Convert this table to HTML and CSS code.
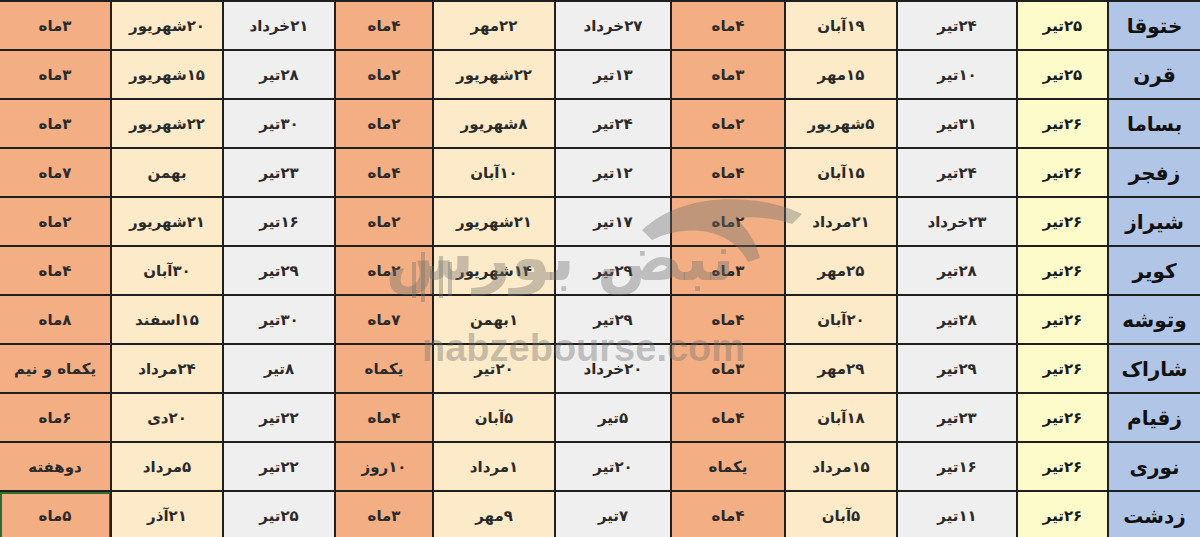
FILE: index.html
```html
<!DOCTYPE html>
<html lang="fa" dir="rtl">
<head>
<meta charset="utf-8">
<title>جدول</title>
<link rel="stylesheet" href="styles.css">
</head>
<body>
<div class="sheet">
  <div class="grid">
    <div class="c n">ختوقا</div><div class="c d">۲۵تیر</div><div class="c g">۲۴تیر</div><div class="c p">۱۹آبان</div><div class="c o">۴ماه</div><div class="c g">۲۷خرداد</div><div class="c p">۲۲مهر</div><div class="c o">۴ماه</div><div class="c g">۲۱خرداد</div><div class="c p">۲۰شهریور</div><div class="c o">۳ماه</div>
    <div class="c n">قرن</div><div class="c d">۲۵تیر</div><div class="c g">۱۰تیر</div><div class="c p">۱۵مهر</div><div class="c o">۳ماه</div><div class="c g">۱۳تیر</div><div class="c p">۲۲شهریور</div><div class="c o">۲ماه</div><div class="c g">۲۸تیر</div><div class="c p">۱۵شهریور</div><div class="c o">۳ماه</div>
    <div class="c n">بساما</div><div class="c d">۲۶تیر</div><div class="c g">۳۱تیر</div><div class="c p">۵شهریور</div><div class="c o">۲ماه</div><div class="c g">۲۴تیر</div><div class="c p">۸شهریور</div><div class="c o">۲ماه</div><div class="c g">۳۰تیر</div><div class="c p">۲۲شهریور</div><div class="c o">۳ماه</div>
    <div class="c n">زفجر</div><div class="c d">۲۶تیر</div><div class="c g">۲۴تیر</div><div class="c p">۱۵آبان</div><div class="c o">۴ماه</div><div class="c g">۱۲تیر</div><div class="c p">۱۰آبان</div><div class="c o">۴ماه</div><div class="c g">۲۳تیر</div><div class="c p">بهمن</div><div class="c o">۷ماه</div>
    <div class="c n">شیراز</div><div class="c d">۲۶تیر</div><div class="c g">۲۳خرداد</div><div class="c p">۲۱مرداد</div><div class="c o">۲ماه</div><div class="c g">۱۷تیر</div><div class="c p">۲۱شهریور</div><div class="c o">۲ماه</div><div class="c g">۱۶تیر</div><div class="c p">۲۱شهریور</div><div class="c o">۲ماه</div>
    <div class="c n">کویر</div><div class="c d">۲۶تیر</div><div class="c g">۲۸تیر</div><div class="c p">۲۵مهر</div><div class="c o">۳ماه</div><div class="c g">۲۹تیر</div><div class="c p">۱۴شهریور</div><div class="c o">۲ماه</div><div class="c g">۲۹تیر</div><div class="c p">۳۰آبان</div><div class="c o">۴ماه</div>
    <div class="c n">وتوشه</div><div class="c d">۲۶تیر</div><div class="c g">۲۸تیر</div><div class="c p">۲۰آبان</div><div class="c o">۴ماه</div><div class="c g">۲۹تیر</div><div class="c p">۱بهمن</div><div class="c o">۷ماه</div><div class="c g">۳۰تیر</div><div class="c p">۱۵اسفند</div><div class="c o">۸ماه</div>
    <div class="c n">شاراک</div><div class="c d">۲۶تیر</div><div class="c g">۲۹تیر</div><div class="c p">۲۹مهر</div><div class="c o">۳ماه</div><div class="c g">۲۰خرداد</div><div class="c p">۲۰تیر</div><div class="c o">یکماه</div><div class="c g">۸تیر</div><div class="c p">۲۴مرداد</div><div class="c o">یکماه و نیم</div>
    <div class="c n">زقیام</div><div class="c d">۲۶تیر</div><div class="c g">۲۳تیر</div><div class="c p">۱۸آبان</div><div class="c o">۴ماه</div><div class="c g">۵تیر</div><div class="c p">۵آبان</div><div class="c o">۴ماه</div><div class="c g">۲۲تیر</div><div class="c p">۲۰دی</div><div class="c o">۶ماه</div>
    <div class="c n">نوری</div><div class="c d">۲۶تیر</div><div class="c g">۱۶تیر</div><div class="c p">۱۵مرداد</div><div class="c o">یکماه</div><div class="c g">۲۰تیر</div><div class="c p">۱مرداد</div><div class="c o">۱۰روز</div><div class="c g">۲۲تیر</div><div class="c p">۵مرداد</div><div class="c o">دوهفته</div>
    <div class="c n">زدشت</div><div class="c d">۲۶تیر</div><div class="c g">۱۱تیر</div><div class="c p">۵آبان</div><div class="c o">۴ماه</div><div class="c g">۷تیر</div><div class="c p">۹مهر</div><div class="c o">۳ماه</div><div class="c g">۲۵تیر</div><div class="c p">۲۱آذر</div><div class="c o sel">۵ماه</div>
  </div>
  <div class="wm" aria-hidden="true">
    <svg class="wm-art" width="460" height="200" viewBox="0 0 460 200">
      <path d="M292 50 C318 26 356 16 398 20 C422 22 440 28 452 34 L442 44 C424 38 404 36 386 38 C398 50 406 62 410 78 L398 82 C390 66 376 56 358 52 C338 48 318 52 302 60 Z" fill="rgba(110,110,110,0.38)"/>
      <g fill="rgba(110,110,110,0.38)">
        <rect x="62" y="82" width="4" height="36"/>
        <rect x="71" y="72" width="4" height="50"/>
        <rect x="80" y="86" width="4" height="28"/>
        <rect x="89" y="76" width="4" height="42"/>
        <rect x="98" y="82" width="4" height="34"/>
      </g>
    </svg>
    <div class="wm-fa">نبض بورس</div>
    <div class="wm-en">nabzebourse.com</div>
  </div>
</div>
</body>
</html>
```
FILE: styles.css
```css
html, body {
  margin: 0;
  padding: 0;
  width: 1200px;
  height: 537px;
  overflow: hidden;
  background: #ffffff;
}
.sheet {
  position: relative;
  width: 1200px;
  height: 537px;
  overflow: hidden;
}
.grid {
  display: grid;
  direction: rtl;
  grid-template-columns: 91px 89px 118px 110px 112px 114px 120px 96px 110px 110px 110px;
  grid-auto-rows: 47px;
  gap: 2px;
  padding-top: 2px;
  background: #1f1f1f;
  width: 1200px;
}
.c {
  display: flex;
  align-items: center;
  justify-content: center;
  font-family: "DejaVu Sans", sans-serif;
  font-weight: bold;
  font-size: 15px;
  color: #2a2a2a;
  white-space: nowrap;
}
.n { background: #b1c5e6; font-size: 20px; color: #111; }
.d { background: #fdfbca; color: #1a1a1a; }
.g { background: #efeff0; }
.p { background: #fdeac8; }
.o { background: #f3ae84; }
.sel { box-shadow: inset 2px 2px 0 #2c6e2f, inset -1px 0 0 #2c6e2f; }
.wm {
  position: absolute;
  left: 350px;
  top: 180px;
  width: 460px;
  height: 200px;
  pointer-events: none;
}
.wm-art {
  position: absolute;
  left: 0;
  top: 0;
}
.wm-fa {
  position: absolute;
  left: 15px;
  top: 38px;
  width: 390px;
  direction: rtl;
  text-align: center;
  white-space: nowrap;
  font-family: "DejaVu Sans", sans-serif;
  font-weight: bold;
  font-size: 64px;
  line-height: 80px;
  color: rgba(110, 110, 110, 0.38);
}
.wm-en {
  position: absolute;
  left: 72px;
  top: 146px;
  direction: ltr;
  white-space: nowrap;
  font-family: "Liberation Sans", sans-serif;
  font-weight: bold;
  font-size: 38px;
  line-height: 44px;
  color: rgba(110, 110, 110, 0.38);
}
```
